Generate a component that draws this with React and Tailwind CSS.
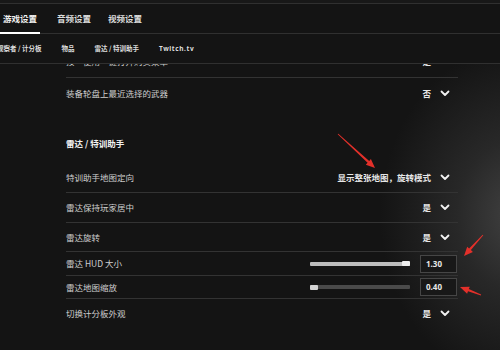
import React from "react";

const font = { fontFamily: '"Noto Sans CJK SC", "Noto Sans", sans-serif' };

const Chevron = () => (
  <svg width="10" height="7" viewBox="0 0 10 7" className="shrink-0">
    <polyline points="1.5,1.5 5,5 8.5,1.5" fill="none" stroke="#f2f2f2" strokeWidth="1.8" strokeLinecap="round" strokeLinejoin="round" />
  </svg>
);

// tapered red annotation arrow, tail -> tip
const Arrow = ({ x1, y1, x2, y2 }) => {
  const dx = x2 - x1;
  const dy = y2 - y1;
  const len = Math.hypot(dx, dy);
  const ux = dx / len;
  const uy = dy / len;
  const nx = -uy;
  const ny = ux;
  const headLen = 9;
  const bx = x2 - ux * headLen;
  const by = y2 - uy * headLen;
  const p = (x, y) => `${x.toFixed(1)},${y.toFixed(1)}`;
  const pts = [
    p(x1 + nx * 0.4, y1 + ny * 0.4),
    p(bx + nx * 1.2, by + ny * 1.2),
    p(bx + nx * 3.8, by + ny * 3.8),
    p(x2, y2),
    p(bx - nx * 3.8, by - ny * 3.8),
    p(bx - nx * 1.2, by - ny * 1.2),
    p(x1 - nx * 0.4, y1 - ny * 0.4),
  ].join(" ");
  return <polygon points={pts} fill="#e3302a" />;
};

const SelectRow = ({ label, value, className }) => (
  <div className={`flex items-center justify-between border-b border-[#333333] ${className}`}>
    <span className="text-[8.5px] text-[#cfcfcf]">{label}</span>
    <div className="flex items-center gap-[9px] pr-[8px]">
      <span className="text-[8.5px] font-bold text-[#e6e6e6]">{value}</span>
      <Chevron />
    </div>
  </div>
);

const SliderRow = ({ label, value, full, className }) => (
  <div className={`flex items-center justify-between border-b border-[#333333] ${className}`}>
    <span className="text-[8.5px] text-[#cfcfcf]">{label}</span>
    <div className="flex items-center gap-[10px] pr-[1px]">
      <div className={`relative w-[100px] h-[4px] rounded-[1px] ${full ? "bg-[#bdbdbd]" : "bg-[#4a4a4a]"}`}>
        <div className={`absolute top-[-0.5px] h-[5px] w-[8px] rounded-[1px] ${full ? "right-0 bg-[#ededed]" : "left-0 bg-[#d4d4d4]"}`} />
      </div>
      <div className="w-[37px] h-[18px] border border-[#464646] bg-[#181818] flex items-center pl-[5px]">
        <span className="text-[8px] font-bold text-[#e8e8e8]" style={{ fontFamily: '"Noto Sans", sans-serif' }}>{value}</span>
      </div>
    </div>
  </div>
);

export default function App() {
  return (
    <div
      className="relative w-[500px] h-[350px] overflow-hidden bg-[#141414] bg-[radial-gradient(ellipse_140px_170px_at_520px_215px,#424242_0%,#282828_45%,rgba(20,20,20,0)_100%)] flex flex-col"
      style={font}
    >
      {/* top strip */}
      <div className="h-[4px] shrink-0 bg-[#181818] border-b border-[#303030]" />

      {/* main tabs */}
      <div className="h-[30px] shrink-0 flex items-stretch gap-[17px] border-b border-[#303030] bg-[#141414]">
        <div className="relative flex items-center px-[3px]">
          <span className="text-[8.5px] font-bold text-[#f0f0f0]">游戏设置</span>
          <span className="absolute left-0 bottom-[-1px] w-full h-[2px] bg-white" />
        </div>
        <div className="flex items-center">
          <span className="text-[8.5px] font-bold text-[#dcdcdc]">音频设置</span>
        </div>
        <div className="flex items-center">
          <span className="text-[8.5px] font-bold text-[#dcdcdc]">视频设置</span>
        </div>
      </div>

      {/* sub tabs */}
      <div className="h-[30px] shrink-0 flex items-center gap-[20px] border-b border-[#303030] bg-[#141414] text-[6.5px] font-bold text-[#dedede]">
        <span className="ml-[-3px]">观察者 / 计分板</span>
        <span>物品</span>
        <span>雷达 / 特训助手</span>
        <span className="tracking-[0.6px]" style={{ fontFamily: '"Noto Sans", sans-serif' }}>Twitch.tv</span>
      </div>

      {/* settings list */}
      <div className="flex-1 overflow-hidden">
        <div className="ml-[66px] w-[392px] flex flex-col">
          <SelectRow className="mt-[-18px] h-[32px]" label="按“使用”键打开购买菜单" value="是" />
          <div className="h-[30px] flex items-center justify-between">
            <span className="text-[8.5px] text-[#cfcfcf]">装备轮盘上最近选择的武器</span>
            <div className="flex items-center gap-[9px] pr-[8px]">
              <span className="text-[8.5px] font-bold text-[#e6e6e6]">否</span>
              <Chevron />
            </div>
          </div>
          <div className="h-[54px] flex items-end pb-[12px]">
            <span className="text-[8.5px] font-bold text-[#f2f2f2]">雷达 / 特训助手</span>
          </div>
          <SelectRow className="h-[31px]" label="特训助手地图定向" value="显示整张地图，旋转模式" />
          <SelectRow className="h-[30px]" label="雷达保持玩家居中" value="是" />
          <SelectRow className="h-[29px]" label="雷达旋转" value="是" />
          <SliderRow className="h-[24px]" label="雷达 HUD 大小" value="1.30" full />
          <SliderRow className="h-[23px]" label="雷达地图缩放" value="0.40" />
          <div className="h-[29px] flex items-center justify-between">
            <span className="text-[8.5px] text-[#cfcfcf]">切换计分板外观</span>
            <div className="flex items-center gap-[9px] pr-[8px]">
              <span className="text-[8.5px] font-bold text-[#e6e6e6]">是</span>
              <Chevron />
            </div>
          </div>
        </div>
      </div>

      {/* red annotation arrows */}
      <svg className="absolute inset-0 pointer-events-none" width="500" height="350">
        <Arrow x1={338} y1={134} x2={375} y2={168} />
        <Arrow x1={483} y1={235} x2={464} y2={256} />
        <Arrow x1={481} y1={295} x2={460} y2={287} />
      </svg>
    </div>
  );
}
